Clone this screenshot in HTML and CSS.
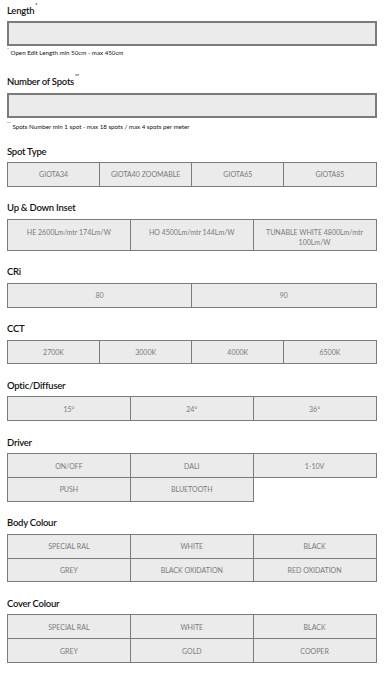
FILE: index.html
```html
<!DOCTYPE html>
<html>
<head>
<meta charset="utf-8">
<link rel="stylesheet" href="styles.css">
</head>
<body>
<div class="form">
  <div class="field">
    <div class="label">Length<sup>*</sup></div>
    <div class="input"></div>
    <div class="note"><sup>*</sup> Open Edit Length min 50cm - max 450cm</div>
  </div>
  <div class="field">
    <div class="label">Number of Spots<sup>**</sup></div>
    <div class="input"></div>
    <div class="note"><sup>**</sup> Spots Number min 1 spot - max 18 spots / max 4 spots per meter</div>
  </div>
  <div class="group">
    <div class="label">Spot Type</div>
    <div class="opts c4">
      <div class="opt">GIOTA34</div><div class="opt">GIOTA40 ZOOMABLE</div><div class="opt">GIOTA65</div><div class="opt">GIOTA85</div>
    </div>
  </div>
  <div class="group">
    <div class="label">Up &amp; Down Inset</div>
    <div class="opts c3 tall">
      <div class="opt">HE 2600Lm/mtr 174Lm/W</div><div class="opt">HO 4500Lm/mtr 144Lm/W</div><div class="opt">TUNABLE WHITE 4800Lm/mtr<br>100Lm/W</div>
    </div>
  </div>
  <div class="group">
    <div class="label">CRi</div>
    <div class="opts c2">
      <div class="opt">80</div><div class="opt">90</div>
    </div>
  </div>
  <div class="group">
    <div class="label">CCT</div>
    <div class="opts c4">
      <div class="opt">2700K</div><div class="opt">3000K</div><div class="opt">4000K</div><div class="opt">6500K</div>
    </div>
  </div>
  <div class="group">
    <div class="label">Optic/Diffuser</div>
    <div class="opts c3">
      <div class="opt">15°</div><div class="opt">24°</div><div class="opt">36°</div>
    </div>
  </div>
  <div class="group">
    <div class="label">Driver</div>
    <div class="opts c3">
      <div class="opt">ON/OFF</div><div class="opt">DALI</div><div class="opt">1-10V</div>
      <div class="opt">PUSH</div><div class="opt">BLUETOOTH</div>
    </div>
  </div>
  <div class="group">
    <div class="label">Body Colour</div>
    <div class="opts c3">
      <div class="opt">SPECIAL RAL</div><div class="opt">WHITE</div><div class="opt">BLACK</div>
      <div class="opt">GREY</div><div class="opt">BLACK OXIDATION</div><div class="opt">RED OXIDATION</div>
    </div>
  </div>
  <div class="group">
    <div class="label">Cover Colour</div>
    <div class="opts c3">
      <div class="opt">SPECIAL RAL</div><div class="opt">WHITE</div><div class="opt">BLACK</div>
      <div class="opt">GREY</div><div class="opt">GOLD</div><div class="opt">COOPER</div>
    </div>
  </div>
</div>
</body>
</html>
```
FILE: styles.css
```css
html, body {
  margin: 0;
  padding: 0;
  background: #ffffff;
}
body {
  font-family: Lato, "Open Sans", sans-serif;
  color: #111;
}
.form {
  width: 369.5px;
  padding: 3.5px 0 0 7px;
}
.label {
  font-size: 9.5px;
  font-weight: 600;
  letter-spacing: -0.25px;
  line-height: 14px;
  height: 14px;
  color: #111;
  margin-bottom: 3.5px;
}
.label sup {
  font-size: 5px;
  vertical-align: top;
  line-height: 8px;
  position: relative;
  top: -3px;
  margin-left: 1px;
}
.input {
  height: 21px;
  border: 2px solid #7b7b7b;
  background: #ebebeb;
}
.note {
  font-size: 6.2px;
  line-height: 8px;
  margin-top: 3px;
  color: #111;
}
.note sup {
  font-size: 4.5px;
  vertical-align: top;
  line-height: 5px;
  position: relative;
  top: -2px;
}
.field + .field {
  margin-top: 18px;
}
.field:nth-child(2) .note {
  margin-top: 5px;
  margin-bottom: 14px;
}
.group + .group {
  margin-top: 14.5px;
}
.opts {
  display: grid;
  border-top: 1px solid #7b7b7b;
  border-left: 1px solid #7b7b7b;
  grid-auto-rows: 23.8px;
}
.c4 { grid-template-columns: repeat(4, 1fr); }
.c3 { grid-template-columns: repeat(3, 1fr); }
.c2 { grid-template-columns: repeat(2, 1fr); }
.tall { grid-auto-rows: 31px; }
.opt {
  background: #ebebeb;
  border-right: 1px solid #7b7b7b;
  border-bottom: 1px solid #7b7b7b;
  font-size: 7px;
  color: #7a7a7a;
  text-align: center;
  display: flex;
  align-items: center;
  justify-content: center;
  line-height: 10px;
}
.tall .opt {
  align-items: flex-start;
  padding-top: 7px;
}
```
